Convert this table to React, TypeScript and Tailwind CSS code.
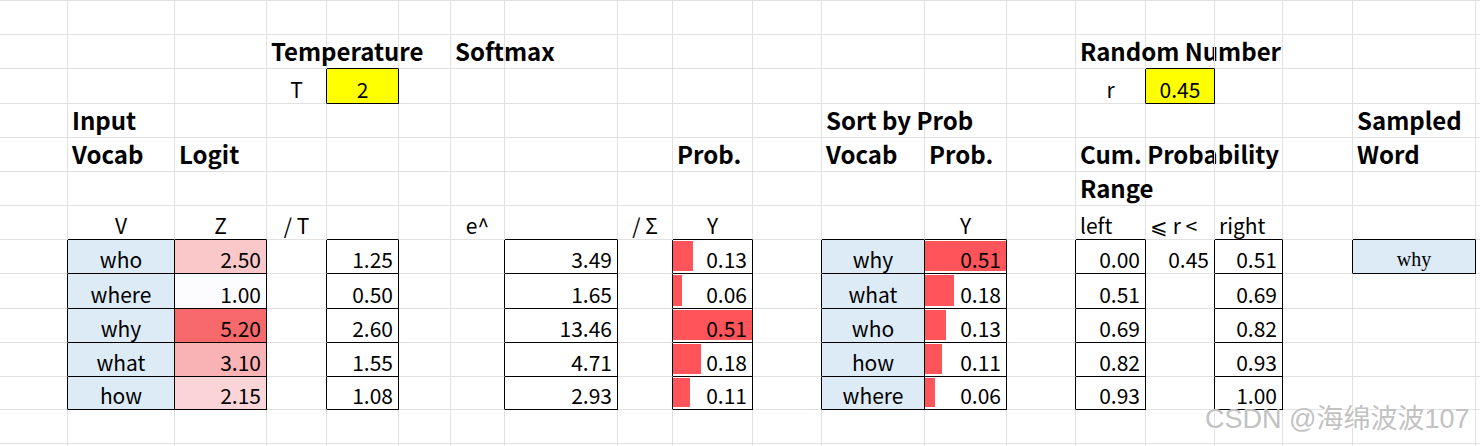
import React from 'react';

type Cell = {
  t?: string;
  a?: 'l' | 'c' | 'r';
  b?: boolean;
  bg?: string;
  box?: boolean;
  bar?: number;
  serif?: boolean;
};

// column widths incl. the right gridline pixel
const COLS = [68, 107, 92, 60, 72, 52, 54, 113, 55, 80, 69, 103, 82, 69, 70, 69, 68, 70, 123, 60];
const NROWS = 14;

const BLUE = 'bg-[#ddebf7]';
const YELLOW = 'bg-[#ffff00]';

const cells: Record<string, Cell> = {};
const put = (r: number, c: number, cell: Cell) => {
  cells[`${r}-${c}`] = cell;
};

// headers
put(1, 3, { t: 'Temperature', b: true });
put(1, 6, { t: 'Softmax', b: true });
put(1, 14, { t: 'Random Number', b: true });
put(2, 3, { t: 'T', a: 'c' });
put(2, 4, { t: '2', a: 'c', bg: YELLOW, box: true });
put(2, 14, { t: 'r', a: 'c' });
put(2, 15, { t: '0.45', a: 'c', bg: YELLOW, box: true });
put(3, 1, { t: 'Input', b: true });
put(3, 11, { t: 'Sort by Prob', b: true });
put(3, 18, { t: 'Sampled', b: true });
put(4, 1, { t: 'Vocab', b: true });
put(4, 2, { t: 'Logit', b: true });
put(4, 9, { t: 'Prob.', b: true });
put(4, 11, { t: 'Vocab', b: true });
put(4, 12, { t: 'Prob.', b: true });
put(4, 14, { t: 'Cum. Probability', b: true });
put(4, 18, { t: 'Word', b: true });
put(5, 14, { t: 'Range', b: true });
put(6, 1, { t: 'V', a: 'c' });
put(6, 2, { t: 'Z', a: 'c' });
put(6, 3, { t: '/ T', a: 'c' });
put(6, 6, { t: 'e^', a: 'c' });
put(6, 8, { t: '/ Σ', a: 'c' });
put(6, 9, { t: 'Y', a: 'c' });
put(6, 12, { t: 'Y', a: 'c' });
put(6, 14, { t: 'left' });
put(6, 15, { t: '⩽ r <' });
put(6, 16, { t: 'right' });

const vocab = ['who', 'where', 'why', 'what', 'how'];
const logit = ['2.50', '1.00', '5.20', '3.10', '2.15'];
const logitBg = ['bg-[#fbc8ca]', 'bg-[#fcfcff]', 'bg-[#f8696b]', 'bg-[#fab3b5]', 'bg-[#fbd4d7]'];
const scaled = ['1.25', '0.50', '2.60', '1.55', '1.08'];
const expd = ['3.49', '1.65', '13.46', '4.71', '2.93'];
const prob = [0.13, 0.06, 0.51, 0.18, 0.11];
const sortedVocab = ['why', 'what', 'who', 'how', 'where'];
const sortedProb = [0.51, 0.18, 0.13, 0.11, 0.06];
const left = ['0.00', '0.51', '0.69', '0.82', '0.93'];
const right = ['0.51', '0.69', '0.82', '0.93', '1.00'];

vocab.forEach((v, i) => {
  const r = 7 + i;
  put(r, 1, { t: v, a: 'c', bg: BLUE, box: true });
  put(r, 2, { t: logit[i], a: 'r', bg: logitBg[i], box: true });
  put(r, 4, { t: scaled[i], a: 'r', box: true });
  put(r, 7, { t: expd[i], a: 'r', box: true });
  put(r, 9, { t: prob[i].toFixed(2), a: 'r', box: true, bar: prob[i] });
  put(r, 11, { t: sortedVocab[i], a: 'c', bg: BLUE, box: true });
  put(r, 12, { t: sortedProb[i].toFixed(2), a: 'r', box: true, bar: sortedProb[i] });
  put(r, 14, { t: left[i], a: 'r', box: true });
  put(r, 16, { t: right[i], a: 'r', box: true });
});
put(7, 15, { t: '0.45', a: 'r' });
put(7, 18, { t: 'why', a: 'c', bg: BLUE, box: true, serif: true });

const isBox = (r: number, c: number) => !!cells[`${r}-${c}`]?.box;

function SheetCell({ r, c }: { r: number; c: number }) {
  const cell = cells[`${r}-${c}`] || {};
  const rightBlack = isBox(r, c) || isBox(r, c + 1);
  const bottomBlack = isBox(r, c) || isBox(r + 1, c);
  const align =
    cell.a === 'c' ? 'justify-center' : cell.a === 'r' ? 'justify-end pr-[5px]' : 'justify-start pl-[4px]';
  const font = cell.serif
    ? "font-['Liberation_Serif',serif] text-[20px] pb-[4px]"
    : cell.b
      ? "font-['Noto_Sans_CJK_SC',sans-serif] font-bold text-[24px] pb-[5px]"
      : "font-['Noto_Sans_CJK_SC',sans-serif] text-[21px] pb-[3px]";
  const barWidth = cell.bar ? Math.round((cell.bar / 0.51) * (COLS[c] - 1)) : 0;

  return (
    <div
      className={`relative flex items-end whitespace-nowrap leading-none text-black border-r border-b ${
        rightBlack ? 'border-r-black' : 'border-r-[#e1e1e1]'
      } ${bottomBlack ? 'border-b-black' : 'border-b-[#e1e1e1]'} ${cell.bg || ''} ${align} ${font}`}
    >
      {cell.bar ? (
        <div className="absolute left-0 top-px bottom-[2px] bg-[#ff555a]" style={{ width: barWidth }} />
      ) : null}
      {cell.t ? <span className="relative">{cell.t}</span> : null}
    </div>
  );
}

export default function App() {
  return (
    <div className="relative w-[1480px] h-[446px] overflow-hidden bg-white">
      <div className="grid grid-cols-[68px_107px_92px_60px_72px_52px_54px_113px_55px_80px_69px_103px_82px_69px_70px_69px_68px_70px_123px_60px] grid-rows-[34px_34px_35px_34px_34px_34px_34px_34px_35px_34px_34px_33px_34px_34px] border-t border-[#e1e1e1]">
        {Array.from({ length: NROWS }).map((_, r) =>
          COLS.map((__, c) => <SheetCell key={`${r}-${c}`} r={r} c={c} />)
        )}
      </div>
      <div className="absolute left-[1205px] top-[406px] whitespace-nowrap text-[27px] leading-none text-[#c2c2c2] font-['Liberation_Sans','Noto_Sans_CJK_SC',sans-serif] [text-shadow:1px_1px_0_#ffffff]">
        CSDN @海绵波波107
      </div>
    </div>
  );
}
